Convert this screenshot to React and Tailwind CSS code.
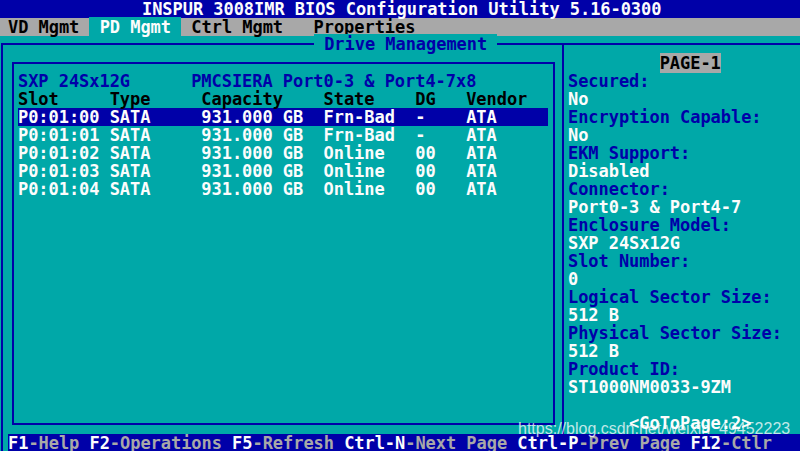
import React from 'react';

const BLUE = 'text-[#0000a8]';
const WHITE = 'text-[#fcfcfc]';

const drives = [
  { slot: 'P0:01:00', type: 'SATA', cap: '931.000 GB', state: 'Frn-Bad', dg: '-', vendor: 'ATA', selected: true },
  { slot: 'P0:01:01', type: 'SATA', cap: '931.000 GB', state: 'Frn-Bad', dg: '-', vendor: 'ATA' },
  { slot: 'P0:01:02', type: 'SATA', cap: '931.000 GB', state: 'Online', dg: '00', vendor: 'ATA' },
  { slot: 'P0:01:03', type: 'SATA', cap: '931.000 GB', state: 'Online', dg: '00', vendor: 'ATA' },
  { slot: 'P0:01:04', type: 'SATA', cap: '931.000 GB', state: 'Online', dg: '00', vendor: 'ATA' },
];

const props = [
  ['Secured:', 'No'],
  ['Encryption Capable:', 'No'],
  ['EKM Support:', 'Disabled'],
  ['Connector:', 'Port0-3 & Port4-7'],
  ['Enclosure Model:', 'SXP 24Sx12G'],
  ['Slot Number:', '0'],
  ['Logical Sector Size:', '512 B'],
  ['Physical Sector Size:', '512 B'],
  ['Product ID:', 'ST1000NM0033-9ZM'],
];

const pad = (s, n) => s.padEnd(n, ' ');

const footer = [
  ['F1', '-Help '],
  ['F2', '-Operations '],
  ['F5', '-Refresh '],
  ['Ctrl-N', '-Next Page '],
  ['Ctrl-P', '-Prev Page '],
  ['F12', '-Ctlr'],
];

export default function App() {
  return (
    <div className="relative w-[800px] h-[451px] overflow-hidden bg-[#00a8a8] font-['DejaVu_Sans_Mono',monospace] font-bold text-[17px] leading-[18px] tracking-[-0.05px] whitespace-pre">
      {/* Title bar */}
      <div className={`h-[18px] bg-[#0000a8] pl-[142px] ${WHITE}`}>
        INSPUR 3008IMR BIOS Configuration Utility 5.16-0300
      </div>

      {/* Menu bar */}
      <div className="h-[18px] bg-[#a8a8a8] pl-[8px] text-black">
        <span>VD Mgmt </span>
        <span className={`bg-[#00a8a8] ${WHITE}`}> PD Mgmt </span>
        <span> Ctrl Mgmt   Properties</span>
      </div>

      {/* Body */}
      <div className="h-[398px] pt-[7px] pl-[1px]">
        <div className="flex h-[391px] border-t-2 border-l-2 border-[#0000a8]">
          {/* Left panel */}
          <div className="w-[559px] flex flex-col">
            <div className="-mt-[10px] h-[18px] pl-[311px]">
              <span className={`bg-[#00a8a8] ${BLUE}`}> Drive Management </span>
            </div>
            <div className="mt-[9px] ml-[9px] w-[543px] h-[363px] border-2 border-[#0000a8] pt-[8px] pl-[4px]">
              <div className={BLUE}>{pad('SXP 24Sx12G', 17)}PMCSIERA Port0-3 &amp; Port4-7x8</div>
              <div className="text-black">
                {pad('Slot', 9)}{pad('Type', 9)}{pad('Capacity', 12)}{pad('State', 9)}{pad('DG', 5)}Vendor
              </div>
              {drives.map((d) => (
                <div
                  key={d.slot}
                  className={`w-[530px] h-[18px] ${WHITE} ${d.selected ? 'bg-[#0000a8]' : ''}`}
                >
                  {pad(d.slot, 9)}{pad(d.type, 9)}{pad(d.cap, 12)}{pad(d.state, 9)}{pad(d.dg, 5)}{d.vendor}
                </div>
              ))}
            </div>
          </div>

          {/* Right panel */}
          <div className="flex-1 border-l-2 border-[#0000a8] pt-[9px] pl-[4px]">
            <div>
              {'         '}
              <span className="bg-[#a8a8a8] text-black">PAGE-1</span>
            </div>
            {props.map(([label, value]) => (
              <React.Fragment key={label}>
                <div className={BLUE}>{label}</div>
                <div className={WHITE}>{value}</div>
              </React.Fragment>
            ))}
            <div className="h-[18px]" />
            <div className={WHITE}>{'      <GoToPage:2>'}</div>
          </div>
        </div>
      </div>

      {/* Footer */}
      <div className="flex h-[18px]">
        <div className="w-[8px] pl-[1px]">
          <div className="h-full border-l-2 border-[#0000a8]" />
        </div>
        <div className="flex-1 bg-[#0000a8]">
          {footer.map(([k, v]) => (
            <React.Fragment key={k}>
              <span className={WHITE}>{k}</span>
              <span className="text-[#a8a8a8]">{v}</span>
            </React.Fragment>
          ))}
        </div>
      </div>

      {/* Watermark */}
      <div className="absolute left-[518px] top-[421px] font-['Liberation_Sans',Arial,sans-serif] font-normal text-[16px] leading-[16px] tracking-normal text-white/75">
        https://blog.csdn.net/weixin_49452223
      </div>
    </div>
  );
}
